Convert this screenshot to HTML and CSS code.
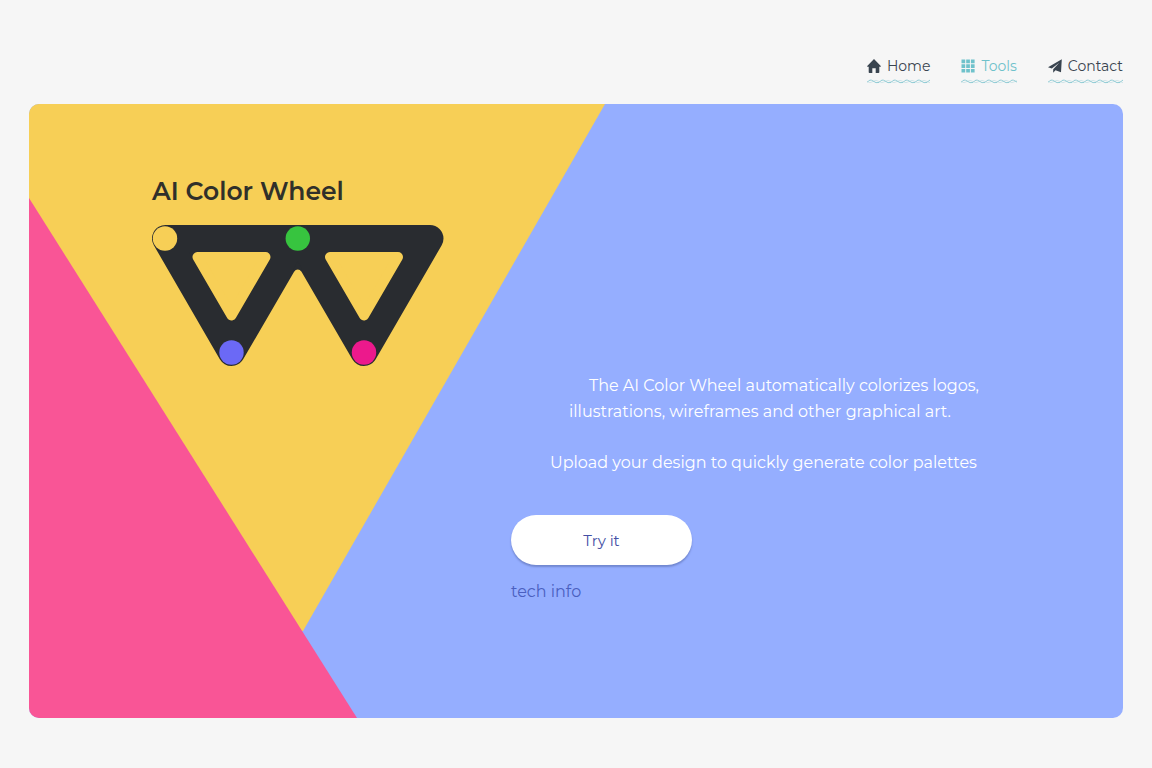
FILE: index.html
```html
<!DOCTYPE html>
<html lang="en">
<head>
<meta charset="utf-8">
<meta name="viewport" content="width=device-width, initial-scale=1">
<title>AI Color Wheel</title>
<link rel="stylesheet" href="styles.css">
</head>
<body>
<header class="site-header">
  <nav class="nav" aria-label="Main">
    <a class="nav-link" href="#home">
      <svg class="nav-icon" viewBox="0 0 14 14" aria-hidden="true"><path d="M7 0 14 7.200 13.500 7.800H12.300V13.200Q12.300 14 11.500 14H8.700V9.300H5.300V14H2.500Q1.700 14 1.700 13.200V7.800H.5L0 7.200Z"/></svg>
      <span>Home</span>
    </a>
    <a class="nav-link nav-link-active" href="#tools">
      <svg class="nav-icon" viewBox="0 0 14 14" aria-hidden="true"><path d="M.5.500h3.700v3.700H.5zM5.200.500h3.700v3.700H5.200zM9.900.500h3.700v3.700H9.900zM.5 5.200h3.700v3.700H.5zM5.200 5.200h3.700v3.700H5.200zM9.900 5.200h3.700v3.700H9.900zM.5 9.900h3.700v3.700H.5zM5.200 9.900h3.700v3.700H5.200zM9.900 9.900h3.700v3.700H9.900z"/></svg>
      <span>Tools</span>
    </a>
    <a class="nav-link" href="#contact">
      <svg class="nav-icon" viewBox="0 0 14 14" aria-hidden="true"><path d="M13.800.3 0 8.200 3.800 9.500 11.200 3.800 5.200 10.300V13.800L7.500 11.200 13 13.200Z"/></svg>
      <span>Contact</span>
    </a>
  </nav>
</header>
<main class="hero">
  <svg class="hero-shapes" viewBox="0 0 1094 614" preserveAspectRatio="none" aria-hidden="true">
    <path fill="#f7cf56" d="M0 0H576L274 527 250 527 0 130Z"/>
    <path fill="#f95596" d="M0 94 328 614H0Z"/>
  </svg>
  <section class="brand">
    <h1 class="brand-title">AI Color Wheel</h1>
    <svg class="brand-logo" viewBox="0 0 292 142" role="img" aria-label="W made of two triangles">
      <path fill="#292c30" stroke="#292c30" stroke-width="27" stroke-linejoin="round" d="M13.500 13.500H278L212 127.500 145.800 13.500 79.500 127.500Z"/>
      <path fill="#292c30" d="M142.300 46.500A4 4 0 0 1 149.300 46.500L150 44 145.800 36 141.500 44Z"/>
      <path fill="#f7cf56" stroke="#f7cf56" stroke-width="10" stroke-linejoin="round" d="M45.500 32H113.500L79.500 90.500ZM178 32H246L212 90.500Z"/>
      <circle cx="13" cy="13.500" r="12.200" fill="#f7cf56"/>
      <circle cx="145.800" cy="13.500" r="12.200" fill="#37c43f"/>
      <circle cx="79.500" cy="127.500" r="12.200" fill="#6b69f6"/>
      <circle cx="212" cy="127.500" r="12.200" fill="#ec198c"/>
    </svg>
  </section>
  <section class="pitch">
    <p class="pitch-text"><span class="line line-first">The AI Color Wheel automatically colorizes logos,</span> <span class="line line-second">illustrations, wireframes and other graphical art.</span></p>
    <p class="pitch-text pitch-upload">Upload your design to quickly generate color palettes</p>
    <button class="try-button" type="button">Try it</button>
    <a class="tech-link" href="#tech-info">tech info</a>
  </section>
</main>
</body>
</html>
```

FILE: styles.css
```css
* { box-sizing: border-box; }
body {
  margin: 0;
  padding: 48px 29px 50px;
  min-height: 100vh;
  display: flex;
  flex-direction: column;
  background: #f6f6f6;
  color: #39444f;
  font-family: Montserrat, Inter, "Open Sans", sans-serif;
}
.site-header { height: 56px; }
.nav { display: flex; justify-content: flex-end; gap: 31px; }
.nav-link {
  display: flex;
  align-items: center;
  gap: 6px;
  height: 36px;
  color: inherit;
  font-size: 14px;
  text-decoration: none;
  background: url("data:image/svg+xml,%3Csvg xmlns='http://www.w3.org/2000/svg' width='12' height='5' viewBox='0 0 12 5'%3E%3Cg fill='none'%3E%3Cpath d='M0 2.500Q3 5 6 2.500T12 2.500' stroke='%23cfe5e9'/%3E%3Cpath d='M0 3.500Q3 -.5 6 2T12 3.500' stroke='%238fcbd4'/%3E%3C/g%3E%3C/svg%3E") left bottom repeat-x;
}
.nav-link-active { color: #6fc2cb; }
.nav-icon { width: 14px; height: 14px; fill: currentColor; }
.hero {
  position: relative;
  flex: 1;
  overflow: hidden;
  border-radius: 10px;
  background: #95aeff;
}
.hero-shapes { position: absolute; inset: 0; width: 100%; height: 100%; }
.brand { position: relative; padding: 70px 0 0 123px; }
.brand-title {
  margin: 0 0 17px;
  color: #30302a;
  font-size: 25px;
  font-weight: 600;
  line-height: 34px;
}
.brand-logo { display: block; width: 292px; height: 142px; }
.pitch {
  position: relative;
  display: flex;
  flex-direction: column;
  align-items: flex-start;
  padding: 6px 0 24px 482px;
}
.pitch-text { margin: 0; color: #fff; font-size: 16px; line-height: 26px; }
.line { display: block; }
.line-first { padding-left: 78px; }
.line-second { padding-left: 58px; }
.pitch-upload { padding: 25px 0 0 39px; }
.try-button {
  width: 181px;
  height: 50px;
  margin-top: 39px;
  border: 0;
  border-radius: 25px;
  background: #fff;
  box-shadow: 0 2px 2px #7187d0;
  color: #4450a5;
  font: inherit;
  font-size: 15px;
}
.tech-link {
  margin-top: 14px;
  color: #4a5fc0;
  font-size: 16px;
  line-height: 26px;
  text-decoration: none;
}
```
